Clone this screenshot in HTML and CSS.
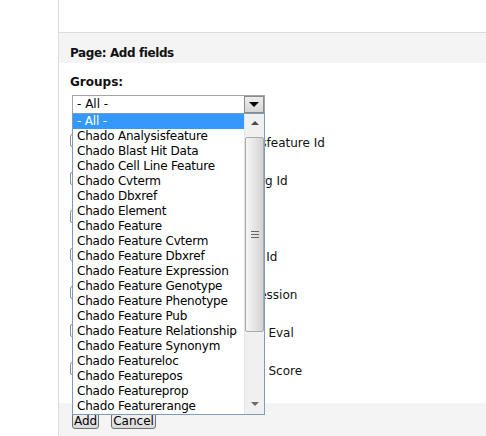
FILE: index.html
```html
<!DOCTYPE html>
<html>
<head>
<meta charset="utf-8">
<link rel="stylesheet" href="styles.css">
</head>
<body>
<div class="page">
  <div class="top"></div>
  <div class="header">Page: Add fields</div>
  <div class="body">
    <div class="groups-label">Groups:</div>
    <div class="select-wrap">
      <div class="select">
        <span class="select-value">- All -</span>
        <span class="select-btn"><span class="tri-down"></span></span>
      </div>
      <div class="dropdown">
        <ul class="options">
          <li class="selected">- All -</li>
          <li>Chado Analysisfeature</li>
          <li>Chado Blast Hit Data</li>
          <li>Chado Cell Line Feature</li>
          <li>Chado Cvterm</li>
          <li>Chado Dbxref</li>
          <li>Chado Element</li>
          <li>Chado Feature</li>
          <li>Chado Feature Cvterm</li>
          <li>Chado Feature Dbxref</li>
          <li>Chado Feature Expression</li>
          <li>Chado Feature Genotype</li>
          <li>Chado Feature Phenotype</li>
          <li>Chado Feature Pub</li>
          <li>Chado Feature Relationship</li>
          <li>Chado Feature Synonym</li>
          <li>Chado Featureloc</li>
          <li>Chado Featurepos</li>
          <li>Chado Featureprop</li>
          <li>Chado Featurerange</li>
        </ul>
        <div class="scrollbar">
          <span class="arrow-up"></span>
          <div class="thumb"><span class="grip"></span></div>
          <span class="arrow-down"></span>
        </div>
      </div>
    </div>
    <div class="fields">
      <div class="field"><span class="check"></span><span class="label">Chado Blast Hit Data Analysisfeature Id</span></div>
      <div class="field"><span class="check"></span><span class="label">Chado Blast Hit Data Blast Org Id</span></div>
      <div class="field"><span class="check"></span><span class="label">Chado Blast Hit Data Hit Url</span></div>
      <div class="field"><span class="check"></span><span class="label">Chado Blast Hit Data Feature Id</span></div>
      <div class="field"><span class="check"></span><span class="label">Chado Blast Hit Data Hit Accession</span></div>
      <div class="field"><span class="check"></span><span class="label">Chado Blast Hit Data Hit Best Eval</span></div>
      <div class="field"><span class="check"></span><span class="label">Chado Blast Hit Data Hit Best Score</span></div>
    </div>
  </div>
  <div class="footer">
    <button class="btn">Add</button>
    <button class="btn">Cancel</button>
  </div>
</div>
</body>
</html>
```
FILE: styles.css
```css
html, body {
  margin: 0;
  padding: 0;
  background: #fff;
}
body {
  font-family: "DejaVu Sans", Verdana, sans-serif;
  font-size: 12px;
  color: #000;
  overflow: hidden;
}
.page {
  margin-left: 58px;
  border-left: 1px solid #dcdcdc;
  min-height: 436px;
  display: flex;
  flex-direction: column;
}
.top {
  height: 32px;
  border-bottom: 1px solid #dcdcdc;
}
.header {
  background: #f4f4f4;
  height: 30px;
  box-sizing: border-box;
  padding: 13px 0 0 11px;
  font-weight: bold;
  line-height: 15px;
  letter-spacing: -0.4px;
  color: #111;
}
.body {
  padding: 12px 0 0 11px;
}
.groups-label {
  font-weight: bold;
  line-height: 15px;
  color: #111;
}
.select-wrap {
  position: relative;
  margin: 5px 0 0 2px;
  width: 193px;
}
.select {
  box-sizing: border-box;
  height: 19px;
  border: 1px solid #a5a5a5;
  display: flex;
  align-items: center;
  justify-content: space-between;
  background: #fff;
}
.select-value {
  padding-left: 4px;
  line-height: 15px;
}
.select-btn {
  box-sizing: border-box;
  width: 20px;
  height: 17px;
  border: 1px solid #8a8a8a;
  background: linear-gradient(#ececec, #d6d6d6);
  display: flex;
  align-items: center;
  justify-content: center;
}
.tri-down {
  width: 0;
  height: 0;
  border-left: 5px solid transparent;
  border-right: 5px solid transparent;
  border-top: 5px solid #000;
}
.dropdown {
  position: absolute;
  z-index: 10;
  top: 18px;
  left: 0;
  width: 193px;
  height: 302px;
  box-sizing: border-box;
  border: 1px solid #7f9db9;
  background: #fff;
  display: flex;
}
.options {
  list-style: none;
  margin: 0;
  padding: 0;
  flex: 1;
  overflow: hidden;
}
.options li {
  height: 15px;
  line-height: 15px;
  padding-left: 4px;
  white-space: nowrap;
  letter-spacing: -0.2px;
}
.options li.selected {
  background: #3399ff;
  color: #fff;
}
.scrollbar {
  width: 20px;
  background: #f0f0f0;
  border-left: 1px solid #e6e6e6;
  box-sizing: border-box;
  display: flex;
  flex-direction: column;
  align-items: center;
}
.arrow-up {
  margin-top: 7px;
  width: 0;
  height: 0;
  border-left: 4px solid transparent;
  border-right: 4px solid transparent;
  border-bottom: 4px solid #4a4a4a;
}
.thumb {
  box-sizing: border-box;
  margin-top: 12px;
  width: 19px;
  height: 195px;
  border: 1px solid #a9a9a9;
  border-radius: 2px;
  background: linear-gradient(to right, #f6f6f6, #e2e2e2 60%, #d2d2d2);
  display: flex;
  align-items: center;
  justify-content: center;
}
.grip {
  width: 8px;
  height: 7px;
  background: repeating-linear-gradient(#666 0, #666 1px, transparent 1px, transparent 3px);
}
.arrow-down {
  margin-top: auto;
  margin-bottom: 8px;
  width: 0;
  height: 0;
  border-left: 4px solid transparent;
  border-right: 4px solid transparent;
  border-top: 4px solid #6a6a6a;
}
.fields {
  margin-top: 20px;
  display: flex;
  flex-direction: column;
  gap: 25px;
}
.field {
  display: flex;
  align-items: center;
  height: 13px;
}
.check {
  box-sizing: border-box;
  width: 13px;
  height: 13px;
  border: 1px solid #8f8f8f;
  border-radius: 2px;
  background: #fff;
  flex: none;
}
.label {
  margin-left: 5px;
  padding-top: 5px;
  white-space: nowrap;
  line-height: 15px;
  color: #111;
}
.footer {
  margin-top: 28px;
  flex: 1;
  background: #f4f4f4;
  padding: 10px 0 0 13px;
  display: flex;
  align-items: flex-start;
  gap: 12px;
}
.btn {
  font-family: "DejaVu Sans", Verdana, sans-serif;
  font-size: 12px;
  line-height: 14px;
  padding: 0 1px;
  margin: 0;
  border: 1px solid #707070;
  border-radius: 3px;
  background: linear-gradient(#f2f2f2, #d9d9d9);
  color: #000;
}
```
